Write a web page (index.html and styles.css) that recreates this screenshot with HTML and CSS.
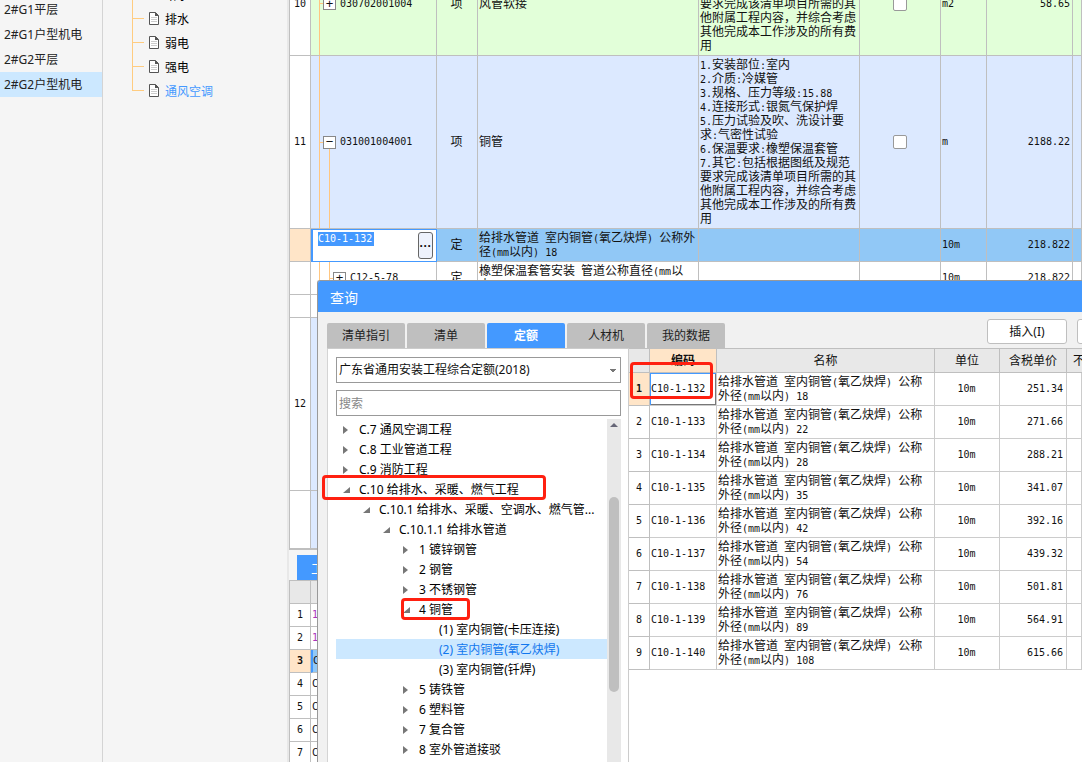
FILE: index.html
```html
<!DOCTYPE html>
<html lang="zh-CN">
<head>
<meta charset="utf-8">
<title>查询</title>
<link rel="stylesheet" href="styles.css">
</head>
<body>
<svg class="defs" width="0" height="0" aria-hidden="true">
  <symbol id="doc" viewBox="0 0 10 13">
    <path d="M.5.5h6l3 3v9h-9z" fill="#fff" stroke="#555"/>
    <path d="M6 .5h.6L9.500 3.400V4H6z" fill="#555"/>
    <path d="M2 5.500h6M2 7.500h6M2 9.500h6" stroke="#ccc"/>
  </symbol>
  <symbol id="closed" viewBox="0 0 7 8"><path d="M0 0l5 4-5 4z" fill="#777"/></symbol>
  <symbol id="open" viewBox="0 0 7 8"><path d="M7 1v6H0z" fill="#777"/></symbol>
</svg>
<div class="app">
  <nav class="buildings">
    <a href="#">2#G1平层</a>
    <a href="#">2#G1户型机电</a>
    <a href="#">2#G2平层</a>
    <a href="#" class="current">2#G2户型机电</a>
  </nav>
  <nav class="sections">
    <ul>
      <li><svg></svg><a href="#">给水</a></li>
      <li><svg><use href="#doc"/></svg><a href="#">排水</a></li>
      <li><svg><use href="#doc"/></svg><a href="#">弱电</a></li>
      <li><svg><use href="#doc"/></svg><a href="#">强电</a></li>
      <li><svg><use href="#doc"/></svg><a href="#" class="current">通风空调</a></li>
    </ul>
  </nav>
  <main class="work">
    <div class="bill">
      <table class="grid">
        <colgroup><col class="w-no"><col class="w-code"><col class="w-kind"><col class="w-name"><col class="w-desc"><col class="w-check"><col class="w-unit"><col class="w-qty"><col></colgroup>
        <tr class="green r-top">
          <th class="n">10</th>
          <td class="code branch"><div class="node"><button class="box" aria-label="展开">+</button><span class="n">030702001004</span></div></td>
          <td class="mid">项</td><td>风管软接</td>
          <td class="low">要求完成该清单项目所需的其<br>他附属工程内容，并综合考虑<br>其他完成本工作涉及的所有费<br>用</td>
          <td class="mid"><input type="checkbox" aria-label="选择 10"></td>
          <td class="n">m2</td><td class="n num">58.65</td><td></td>
        </tr>
        <tr class="blue r-tall">
          <th class="n">11</th>
          <td class="code branch parent"><div class="node"><button class="box" aria-label="收起">−</button><span class="n">031001004001</span></div></td>
          <td class="mid">项</td><td>铜管</td>
          <td><span class="n">1.</span>安装部位<span class="n">:</span>室内<br><span class="n">2.</span>介质<span class="n">:</span>冷媒管<br><span class="n">3.</span>规格、压力等级<span class="n">:15.88</span><br><span class="n">4.</span>连接形式<span class="n">:</span>银氮气保护焊<br><span class="n">5.</span>压力试验及吹、洗设计要<br>求<span class="n">:</span>气密性试验<br><span class="n">6.</span>保温要求<span class="n">:</span>橡塑保温套管<br><span class="n">7.</span>其它<span class="n">:</span>包括根据图纸及规范<br>要求完成该清单项目所需的其<br>他附属工程内容，并综合考虑<br>其他完成本工作涉及的所有费<br>用</td>
          <td class="mid"><input type="checkbox" aria-label="选择 11"></td>
          <td class="n">m</td><td class="n num">2188.22</td><td></td>
        </tr>
        <tr class="active r-mid">
          <th></th>
          <td class="code editing"><div class="editor"><input class="n" type="text" value="C10-1-132" aria-label="编码"><button aria-label="选择编码">···</button></div></td>
          <td class="mid">定</td>
          <td>给排水管道<span class="n"> </span>室内铜管<span class="n">(</span>氧乙炔焊<span class="n">) </span>公称外<br>径<span class="n">(mm</span>以内<span class="n">) 18</span></td>
          <td></td><td></td><td class="n">10m</td><td class="n num">218.822</td><td></td>
        </tr>
        <tr class="r-mid">
          <th></th>
          <td class="code branch child"><div class="node"><button class="box" aria-label="展开">+</button><span class="n">C12-5-78</span></div></td>
          <td class="mid">定</td>
          <td>橡塑保温套管安装<span class="n"> </span>管道公称直径<span class="n">(mm</span>以<br>内<span class="n">)</span></td>
          <td></td><td></td><td class="n">10m</td><td class="n num">218.822</td><td></td>
        </tr>
        <tr class="r-low"><th></th><td></td><td></td><td></td><td></td><td></td><td></td><td></td><td></td></tr>
        <tr class="blue r-tall"><th class="n">12</th><td></td><td></td><td></td><td></td><td></td><td></td><td></td><td></td></tr>
        <tr class="blue r-tall"><th></th><td></td><td></td><td></td><td></td><td></td><td></td><td></td><td></td></tr>
      </table>
    </div>
    <div class="detail">
      <div class="detail-tabs"><button>工</button></div>
      <table class="grid lines">
        <colgroup><col class="w-no"><col></colgroup>
        <tr class="head"><th></th><td></td></tr>
        <tr><th class="n">1</th><td class="n purple">1</td></tr>
        <tr><th class="n">2</th><td class="n purple">1</td></tr>
        <tr class="active"><th class="n">3</th><td class="n">C</td></tr>
        <tr><th class="n">4</th><td class="n">C</td></tr>
        <tr><th class="n">5</th><td class="n">C</td></tr>
        <tr><th class="n">6</th><td class="n">C</td></tr>
        <tr><th class="n">7</th><td class="n">C</td></tr>
      </table>
    </div>
  </main>
</div>

<section class="dialog" role="dialog" aria-labelledby="dlg-title">
  <h1 id="dlg-title">查询</h1>
  <div class="toolbar">
    <div class="tabs">
      <button>清单指引</button><button>清单</button><button class="on">定额</button><button>人材机</button><button>我的数据</button>
    </div>
    <div class="actions"><button>插入(I)</button><button aria-label="替换"></button></div>
  </div>
  <div class="panes">
    <div class="picker">
      <select aria-label="定额库"><option>广东省通用安装工程综合定额(2018)</option></select>
      <input type="search" placeholder="搜索" aria-label="搜索">
      <div class="scroll">
        <ul class="tree">
          <li class="l0"><svg><use href="#closed"/></svg>C.7 通风空调工程</li>
          <li class="l0"><svg><use href="#closed"/></svg>C.8 工业管道工程</li>
          <li class="l0"><svg><use href="#closed"/></svg>C.9 消防工程</li>
          <li class="l0"><svg><use href="#open"/></svg>C.10 给排水、采暖、燃气工程</li>
          <li class="l1"><svg><use href="#open"/></svg>C.10.1 给排水、采暖、空调水、燃气管...</li>
          <li class="l2"><svg><use href="#open"/></svg>C.10.1.1 给排水管道</li>
          <li class="l3"><svg><use href="#closed"/></svg>1 镀锌钢管</li>
          <li class="l3"><svg><use href="#closed"/></svg>2 钢管</li>
          <li class="l3"><svg><use href="#closed"/></svg>3 不锈钢管</li>
          <li class="l3"><svg><use href="#open"/></svg>4 铜管</li>
          <li class="l4"><svg></svg>(1) 室内铜管(卡压连接)</li>
          <li class="l4 on"><svg></svg>(2) 室内铜管(氧乙炔焊)</li>
          <li class="l4"><svg></svg>(3) 室内铜管(钎焊)</li>
          <li class="l3"><svg><use href="#closed"/></svg>5 铸铁管</li>
          <li class="l3"><svg><use href="#closed"/></svg>6 塑料管</li>
          <li class="l3"><svg><use href="#closed"/></svg>7 复合管</li>
          <li class="l3"><svg><use href="#closed"/></svg>8 室外管道接驳</li>
        </ul>
        <div class="bar"><svg viewBox="0 0 8 4"><path d="M0 4l4-4 4 4z" fill="#667"/></svg><div class="thumb"></div></div>
      </div>
    </div>
    <div class="results">
      <table class="grid">
        <colgroup><col class="q-no"><col class="q-code"><col class="q-name"><col class="q-unit"><col class="q-price"><col></colgroup>
        <tr class="head"><th></th><th class="sorted">编码</th><th>名称</th><th>单位</th><th>含税单价</th><th class="cut">不含税单价</th></tr>
        <tr class="picked"><th class="n">1</th><td class="n">C10-1-132</td><td>给排水管道<span class="n"> </span>室内铜管<span class="n">(</span>氧乙炔焊<span class="n">) </span>公称<br>外径<span class="n">(mm</span>以内<span class="n">) 18</span></td><td class="n mid">10m</td><td class="n num">251.34</td><td></td></tr>
        <tr><th class="n">2</th><td class="n">C10-1-133</td><td>给排水管道<span class="n"> </span>室内铜管<span class="n">(</span>氧乙炔焊<span class="n">) </span>公称<br>外径<span class="n">(mm</span>以内<span class="n">) 22</span></td><td class="n mid">10m</td><td class="n num">271.66</td><td></td></tr>
        <tr><th class="n">3</th><td class="n">C10-1-134</td><td>给排水管道<span class="n"> </span>室内铜管<span class="n">(</span>氧乙炔焊<span class="n">) </span>公称<br>外径<span class="n">(mm</span>以内<span class="n">) 28</span></td><td class="n mid">10m</td><td class="n num">288.21</td><td></td></tr>
        <tr><th class="n">4</th><td class="n">C10-1-135</td><td>给排水管道<span class="n"> </span>室内铜管<span class="n">(</span>氧乙炔焊<span class="n">) </span>公称<br>外径<span class="n">(mm</span>以内<span class="n">) 35</span></td><td class="n mid">10m</td><td class="n num">341.07</td><td></td></tr>
        <tr><th class="n">5</th><td class="n">C10-1-136</td><td>给排水管道<span class="n"> </span>室内铜管<span class="n">(</span>氧乙炔焊<span class="n">) </span>公称<br>外径<span class="n">(mm</span>以内<span class="n">) 42</span></td><td class="n mid">10m</td><td class="n num">392.16</td><td></td></tr>
        <tr><th class="n">6</th><td class="n">C10-1-137</td><td>给排水管道<span class="n"> </span>室内铜管<span class="n">(</span>氧乙炔焊<span class="n">) </span>公称<br>外径<span class="n">(mm</span>以内<span class="n">) 54</span></td><td class="n mid">10m</td><td class="n num">439.32</td><td></td></tr>
        <tr><th class="n">7</th><td class="n">C10-1-138</td><td>给排水管道<span class="n"> </span>室内铜管<span class="n">(</span>氧乙炔焊<span class="n">) </span>公称<br>外径<span class="n">(mm</span>以内<span class="n">) 76</span></td><td class="n mid">10m</td><td class="n num">501.81</td><td></td></tr>
        <tr><th class="n">8</th><td class="n">C10-1-139</td><td>给排水管道<span class="n"> </span>室内铜管<span class="n">(</span>氧乙炔焊<span class="n">) </span>公称<br>外径<span class="n">(mm</span>以内<span class="n">) 89</span></td><td class="n mid">10m</td><td class="n num">564.91</td><td></td></tr>
        <tr><th class="n">9</th><td class="n">C10-1-140</td><td>给排水管道<span class="n"> </span>室内铜管<span class="n">(</span>氧乙炔焊<span class="n">) </span>公称<br>外径<span class="n">(mm</span>以内<span class="n">) 108</span></td><td class="n mid">10m</td><td class="n num">615.66</td><td></td></tr>
      </table>
    </div>
  </div>
</section>
<div class="mark mark-code"></div>
<div class="mark mark-chapter"></div>
<div class="mark mark-pipe"></div>
</body>
</html>
```
FILE: styles.css
```css
* { box-sizing: border-box; }
body {
  margin: 0;
  height: 100vh;
  overflow: hidden;
  position: relative;
  background: #f5f5f5;
  color: #111;
  font: 12px/14px "Noto Sans", "Noto Sans CJK SC", sans-serif;
}
ul { list-style: none; margin: 0; padding: 0; }
a { color: inherit; text-decoration: none; }
button, input, select { font: inherit; color: inherit; margin: 0; padding: 0; }
.defs { position: absolute; }

.app { display: flex; height: 100%; }

.buildings { width: 103px; flex: none; border-right: 1px solid #d4d4d4; color: #222; }
.buildings a { display: block; line-height: 25px; padding-left: 4px; }
.buildings a:first-child { margin-top: -3px; }
.buildings .current { background: #cce8ff; }

.sections { width: 184px; flex: none; padding-left: 29px; margin-top: -17px; color: #000; }
.sections li {
  display: flex;
  align-items: center;
  height: 24px;
  background:
    linear-gradient(#ffcc80, #ffcc80) 0 0 / 1px 100% no-repeat,
    linear-gradient(#ffcc80, #ffcc80) 0 11px / 12px 1px no-repeat;
}
.sections li:last-child {
  background-size: 1px 12px, 12px 1px;
}
.sections svg { width: 10px; height: 13px; margin: 0 6px 2px 17px; }
.sections a { padding-top: 2px; }
.sections .current { color: #49f; }

.work {
  flex: 1;
  min-width: 0;
  display: flex;
  flex-direction: column;
  border-left: 2px solid #e8e8e8;
}
.bill { height: 550px; flex: none; overflow: hidden; background: #fff; border-left: 1px solid #bfbfbf; border-bottom: 2px solid #bfbfbf; }
.bill .grid { margin-top: -48px; }

.grid {
  width: 100%;
  table-layout: fixed;
  border-collapse: separate;
  border-spacing: 0;
  background: #fff;
  font-family: "Liberation Sans", "Noto Sans CJK SC", sans-serif;
}
.grid td, .grid th {
  border-right: 1px solid #bfbfbf;
  border-bottom: 1px solid #bfbfbf;
  padding: 0 2px 0 1px;
  font-weight: normal;
  text-align: left;
  vertical-align: middle;
  white-space: nowrap;
  overflow: hidden;
}
.grid th { text-align: center; padding: 0; }
.grid .mid { text-align: center; }
.grid .num { text-align: right; }
.grid .low { vertical-align: bottom; padding-bottom: 2px; }
.n { font-family: "DejaVu Sans Mono", monospace; font-size: 10px; white-space: pre; }
td > span.n { line-height: 0; }
.grid td.n, .grid th.n { font-family: "DejaVu Sans Mono", monospace; }

.w-no { width: 21px; }
.w-code { width: 126px; }
.w-kind { width: 41px; }
.w-name { width: 221px; }
.w-desc { width: 161px; }
.w-check { width: 81px; }
.w-unit { width: 46px; }
.w-qty { width: 86px; }
.r-top { height: 104px; }
.r-tall { height: 173px; }
.r-mid { height: 33px; }
.r-low { height: 23px; }
.green td { background-color: #e2ffd9; }
.blue td { background-color: #dce9ff; }
.active td { background-color: #91c8f6; }
.active th { background-color: #ffe5c8; font-weight: bold; }

.bill td.code { padding: 0; }
.node { display: flex; align-items: center; gap: 4px; padding-left: 12px; height: 100%; }
.branch {
  background-image: linear-gradient(#ffc680, #ffc680), linear-gradient(#ffc680, #ffc680);
  background-position: 8px 0, 8px 50%;
  background-size: 1px 100%, 4px 1px;
  background-repeat: no-repeat;
}
.parent {
  background-image: linear-gradient(#ffc680, #ffc680), linear-gradient(#ffc680, #ffc680), linear-gradient(#ffc680, #ffc680);
  background-position: 8px 0, 8px 50%, 18px 100%;
  background-size: 1px 100%, 4px 1px, 1px 50%;
}
.child {
  background-image: linear-gradient(#ffc680, #ffc680), linear-gradient(#ffc680, #ffc680), linear-gradient(#ffc680, #ffc680);
  background-position: 8px 0, 18px 50%, 18px 0;
  background-size: 1px 100%, 4px 1px, 1px 100%;
}
.child .node { padding-left: 22px; }
.box {
  width: 13px;
  height: 13px;
  border: 1px solid #888;
  background: #fff;
  font: 13px/10px "Liberation Sans", sans-serif;
}
input[type="checkbox"] {
  appearance: none;
  display: block;
  width: 14px;
  height: 14px;
  margin: 0 auto;
  border: 1px solid #999;
  border-radius: 2px;
  background: #fff;
}
.grid td.editing { background: #fff; border: 1px solid #49f; border-width: 1px 1px 1px 2px; }
.editor { display: flex; justify-content: space-between; padding: 1px 3px 1px 5px; }
.editor input { width: 56px; height: 14px; border: 0; background: #49f; color: #fff; font-family: "DejaVu Sans Mono", monospace; font-size: 10px; }
.editor button {
  width: 15px;
  height: 27px;
  border: 1px solid #666;
  border-radius: 3px;
  background: #eef2fc;
  font: bold 12px/20px "Liberation Sans", sans-serif;
}

.detail { flex: 1; min-height: 0; overflow: hidden; }
.detail-tabs { padding: 5px 0 0 8px; height: 30px; }
.detail-tabs button { width: 70px; height: 25px; border: 0; background: #49f; color: #fff; padding: 0 0 0 14px; text-align: left; font-size: 13px; }
.lines { border: 1px solid #bfbfbf; border-width: 1px 0 0 1px; }
.lines tr { height: 23px; }
.lines .active td { border-left: 2px solid #49f; padding-left: 0; }
.lines .purple { color: #a3b; }
.grid .head td, .grid .head th { background: #e8e8e8; }

.dialog {
  position: absolute;
  left: 317px;
  top: 280px;
  right: 0;
  bottom: 0;
  display: flex;
  flex-direction: column;
  overflow: hidden;
  border: 1px solid #999;
  border-width: 1px 0 0 1px;
  border-top-left-radius: 3px;
  background: #f1f1f1;
}
.dialog h1 { margin: 0; padding-left: 12px; height: 31px; flex: none; background: #49f; color: #fff; font-size: 14px; font-weight: normal; line-height: 33px; }
.toolbar { display: flex; justify-content: space-between; height: 37px; flex: none; margin-left: 9px; border-bottom: 1px solid #ccc; }
.tabs { display: flex; gap: 2px; align-items: flex-end; }
.tabs button { width: 78px; height: 25px; border: 0; border-radius: 2px 2px 0 0; background: #bfbfbf; color: #222; }
.tabs .on { background: #49f; color: #fff; font-weight: bold; }
.actions { display: flex; gap: 10px; padding-top: 7px; overflow: hidden; flex: none; width: 95px; }
.actions button { width: 80px; height: 25px; flex: none; border: 1px solid #bfbfbf; border-radius: 3px; background: #fff; }
.panes { flex: 1; min-height: 0; display: flex; margin-left: 9px; border-left: 1px solid #d4d4d4; }
.picker { width: 300px; flex: none; display: flex; flex-direction: column; padding: 8px 7px 0 8px; background: #fff; }
.picker select, .picker input { width: 285px; height: 26px; flex: none; border: 1px solid #999; border-radius: 0; background: #fff; padding: 0 2px; outline: 0; }
.picker select {
  appearance: none;
  background:
    linear-gradient(to bottom right, #777 50%, transparent 51%) 276px 11px / 3px 3px no-repeat,
    linear-gradient(to bottom left, #777 50%, transparent 51%) 273px 11px / 3px 3px no-repeat,
    #fff;
}
.picker input { margin: 7px 0 3px; appearance: none; }
.picker input::placeholder { color: #888; }
.scroll { flex: 1; min-height: 0; display: flex; width: 285px; overflow: hidden; }
.tree { flex: 1; min-width: 0; color: #000; }
.tree li { display: flex; align-items: center; height: 20px; line-height: 20px; padding-top: 2px; white-space: nowrap; }
.tree svg { width: 7px; height: 8px; margin: 0 9px 0 0; flex: none; }
.l0 { padding-left: 7px; }
.l1 { padding-left: 27px; }
.l2 { padding-left: 47px; }
.l3 { padding-left: 67px; }
.l4 { padding-left: 87px; }
.tree .on { background: #cce8ff; color: #17e; }
.bar { width: 14px; flex: none; background: #e8e8e8; padding: 0 2px; display: flex; flex-direction: column; align-items: center; gap: 70px; }
.bar svg { width: 8px; height: 4px; margin-top: 4px; flex: none; }
.thumb { width: 10px; height: 195px; flex: none; border-radius: 5px; background: #bfbfbf; }

.results { flex: 1; min-width: 0; background: #fff; border-left: 1px solid #ccc; }
.results .grid { border-top: 1px solid #bfbfbf; margin-top: -1px; }
.results .grid td { border-color: #ccc; }
.results tr { height: 33px; }
.results .head { height: 24px; }
.results .grid .sorted { background: #ffe5c8; font-weight: bold; }
.results .grid .cut { text-align: left; padding-left: 6px; border-right: 0; }
.results .num { padding-right: 3px; }
.results .picked th { background: #ffe5c8; font-weight: bold; }
.results .grid .picked td:nth-child(2) { box-shadow: inset 1px 1px #49f, inset -1px -1px #777; }
.q-no { width: 21px; }
.q-code { width: 67px; }
.q-name { width: 218px; }
.q-unit { width: 65px; }
.q-price { width: 67px; }

.mark { position: absolute; border: 3px solid #ff2010; border-radius: 4px; pointer-events: none; }
.mark-code { left: 630px; top: 362px; width: 83px; height: 37px; }
.mark-chapter { left: 322px; top: 475px; width: 224px; height: 25px; }
.mark-pipe { left: 401px; top: 598px; width: 69px; height: 22px; }
```
